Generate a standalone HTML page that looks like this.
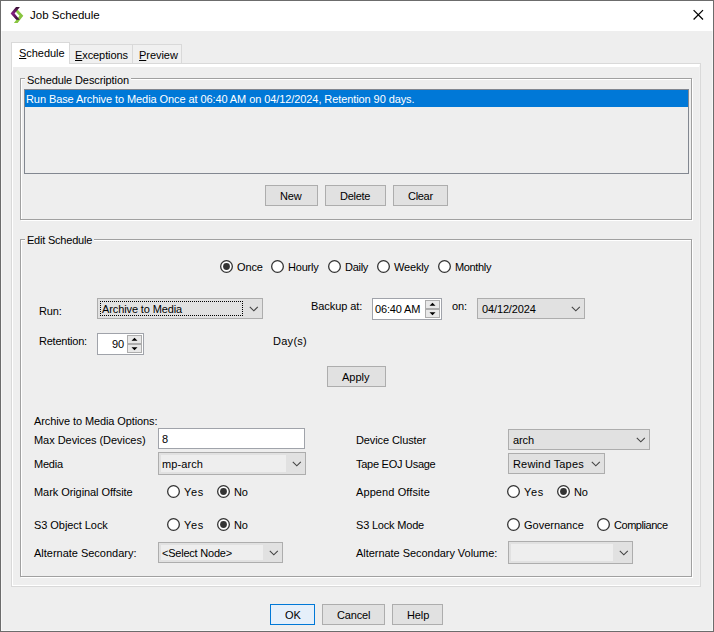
<!DOCTYPE html>
<html><head><meta charset="utf-8">
<style>
html,body{margin:0;padding:0}
body{width:714px;height:632px;position:relative;overflow:hidden;background:#eeeeee;font-family:"Liberation Sans",sans-serif}
div{position:absolute;box-sizing:border-box}
.t{font-size:11px;line-height:13px;letter-spacing:-0.12px;white-space:pre;color:#000}
.bx{border:1px solid #adadad;background:#e1e1e1}
.u{text-decoration:underline}
.r{width:13px;height:13px;border:1px solid #333;border-radius:50%;background:#fff}
.r.on::after{content:"";position:absolute;left:2px;top:2px;width:7px;height:7px;border-radius:50%;background:#333}
svg{position:absolute}
</style></head><body>
<!-- window frame -->
<div style="left:0;top:0;width:714px;height:632px;border:1px solid #6c6c6c"></div>
<div style="left:1px;top:31px;width:712px;height:600px;border:1px solid #f7f7f7;border-top:0"></div>
<div style="left:1px;top:1px;width:712px;height:30px;background:#fff"></div>
<svg style="left:0;top:0" width="30" height="30" viewBox="0 0 30 30">
<defs><linearGradient id="pg" x1="0" y1="7" x2="0" y2="20" gradientUnits="userSpaceOnUse"><stop offset="0" stop-color="#35102f"/><stop offset="0.5" stop-color="#861f82"/><stop offset="1" stop-color="#320b2e"/></linearGradient></defs>
<polygon points="13.7,9.5 17.5,9.5 23.3,15.7 17.6,23 13.9,23 19.5,15.7" fill="#88c540"/>
<polygon points="16,7 19.9,7 14.6,13.4 19.7,19.8 16.2,19.8 10.6,13.4" fill="url(#pg)"/>
</svg>
<svg style="left:690px;top:6px" width="20" height="20" viewBox="0 0 20 20"><path d="M3.6 4.1L13 13.5M13 4.1L3.6 13.5" stroke="#000" stroke-width="1.25"/></svg>

<!-- tab pane -->
<div style="left:11px;top:63px;width:690px;height:524px;border:1px solid #d9d9d9"></div>
<div style="left:12px;top:64px;width:688px;height:522px;border:1px solid #fff;border-top:3px solid #fff;border-right-color:#f1f1f1"></div>
<div style="left:69px;top:44px;width:64px;height:19px;border:1px solid #d9d9d9;border-bottom:0;background:#f0f0f0"></div>
<div style="left:132px;top:44px;width:50px;height:19px;border:1px solid #d9d9d9;border-bottom:0;background:#f0f0f0"></div>
<div style="left:11px;top:42px;width:59px;height:22px;border:1px solid #d9d9d9;border-bottom:0;background:#fff"></div>

<!-- Schedule Description -->
<div style="left:21px;top:79px;width:672px;height:142px;border:1px solid #fff"></div>
<div style="left:20px;top:78px;width:672px;height:142px;border:1px solid #a0a0a0"></div>
<div style="left:24px;top:89px;width:665px;height:85px;border:1px solid #828790;background:#eeeeee"></div>
<div style="left:25px;top:90px;width:663px;height:17px;background:#0078d7"></div>
<div class="bx" style="left:265px;top:185px;width:53px;height:21px"></div>
<div class="bx" style="left:325px;top:185px;width:61px;height:21px"></div>
<div class="bx" style="left:393px;top:185px;width:55px;height:21px"></div>

<!-- Edit Schedule -->
<div style="left:21px;top:240px;width:672px;height:338px;border:1px solid #fff"></div>
<div style="left:20px;top:239px;width:672px;height:338px;border:1px solid #a0a0a0"></div>

<svg style="left:220px;top:260px" width="13" height="13" viewBox="0 0 13 13"><circle cx="6.5" cy="6.5" r="5.85" fill="#fff" stroke="#333" stroke-width="1.3"/><circle cx="6.5" cy="6.5" r="3.4" fill="#333"/></svg><svg style="left:271px;top:260px" width="13" height="13" viewBox="0 0 13 13"><circle cx="6.5" cy="6.5" r="5.85" fill="#fff" stroke="#333" stroke-width="1.3"/></svg><svg style="left:328px;top:260px" width="13" height="13" viewBox="0 0 13 13"><circle cx="6.5" cy="6.5" r="5.85" fill="#fff" stroke="#333" stroke-width="1.3"/></svg><svg style="left:377px;top:260px" width="13" height="13" viewBox="0 0 13 13"><circle cx="6.5" cy="6.5" r="5.85" fill="#fff" stroke="#333" stroke-width="1.3"/></svg><svg style="left:438px;top:260px" width="13" height="13" viewBox="0 0 13 13"><circle cx="6.5" cy="6.5" r="5.85" fill="#fff" stroke="#333" stroke-width="1.3"/></svg>
<div class="bx" style="left:97px;top:298px;width:166px;height:21px"></div>
<div style="left:100px;top:301px;width:143px;height:15px;border:1px dotted #000"></div>
<svg style="left:249px;top:306px" width="10" height="6" viewBox="0 0 10 6"><path d="M0.8 0.8L4.8 4.8L8.8 0.8" fill="none" stroke="#444" stroke-width="1.1"/></svg>

<div style="left:372px;top:298px;width:70px;height:22px;border:1px solid #a0a3aa;background:#fff"></div>
<div style="left:425px;top:300px;width:15px;height:9px;border:1px solid #adadad;background:#e8e8e8"></div>
<div style="left:425px;top:309px;width:15px;height:9px;border:1px solid #adadad;background:#e8e8e8"></div>
<svg style="left:429px;top:302px" width="7" height="14" viewBox="0 0 7 14"><path d="M0.5 3.8L3.5 0.8L6.5 3.8Z M0.5 10.2L3.5 13.2L6.5 10.2Z" fill="#000"/></svg>

<div class="bx" style="left:477px;top:298px;width:108px;height:21px"></div>
<svg style="left:571px;top:306px" width="10" height="6" viewBox="0 0 10 6"><path d="M0.8 0.8L4.8 4.8L8.8 0.8" fill="none" stroke="#444" stroke-width="1.1"/></svg>

<div style="left:97px;top:333px;width:47px;height:22px;border:1px solid #a0a3aa;background:#fff"></div>
<div style="left:127px;top:335px;width:15px;height:9px;border:1px solid #adadad;background:#e8e8e8"></div>
<div style="left:127px;top:344px;width:15px;height:9px;border:1px solid #adadad;background:#e8e8e8"></div>
<svg style="left:131px;top:337px" width="7" height="14" viewBox="0 0 7 14"><path d="M0.5 3.8L3.5 0.8L6.5 3.8Z M0.5 10.2L3.5 13.2L6.5 10.2Z" fill="#000"/></svg>

<div class="bx" style="left:327px;top:366px;width:59px;height:21px"></div>

<div style="left:158px;top:428px;width:147px;height:21px;border:1px solid #a0a3aa;background:#fff"></div>
<div class="bx" style="left:158px;top:452px;width:148px;height:23px;background:#e1e1e1"></div>
<div style="left:161px;top:455px;width:125px;height:17px;background:#eeeeee"></div>
<svg style="left:292px;top:461px" width="10" height="6" viewBox="0 0 10 6"><path d="M0.8 0.8L4.8 4.8L8.8 0.8" fill="none" stroke="#444" stroke-width="1.1"/></svg>

<div class="bx" style="left:508px;top:429px;width:142px;height:21px"></div>
<svg style="left:636px;top:437px" width="10" height="6" viewBox="0 0 10 6"><path d="M0.8 0.8L4.8 4.8L8.8 0.8" fill="none" stroke="#444" stroke-width="1.1"/></svg>
<div class="bx" style="left:508px;top:453px;width:97px;height:21px"></div>
<svg style="left:591px;top:461px" width="10" height="6" viewBox="0 0 10 6"><path d="M0.8 0.8L4.8 4.8L8.8 0.8" fill="none" stroke="#444" stroke-width="1.1"/></svg>

<svg style="left:167px;top:485px" width="13" height="13" viewBox="0 0 13 13"><circle cx="6.5" cy="6.5" r="5.85" fill="#fff" stroke="#333" stroke-width="1.3"/></svg><svg style="left:217px;top:485px" width="13" height="13" viewBox="0 0 13 13"><circle cx="6.5" cy="6.5" r="5.85" fill="#fff" stroke="#333" stroke-width="1.3"/><circle cx="6.5" cy="6.5" r="3.4" fill="#333"/></svg><svg style="left:507px;top:485px" width="13" height="13" viewBox="0 0 13 13"><circle cx="6.5" cy="6.5" r="5.85" fill="#fff" stroke="#333" stroke-width="1.3"/></svg><svg style="left:557px;top:485px" width="13" height="13" viewBox="0 0 13 13"><circle cx="6.5" cy="6.5" r="5.85" fill="#fff" stroke="#333" stroke-width="1.3"/><circle cx="6.5" cy="6.5" r="3.4" fill="#333"/></svg>
<svg style="left:167px;top:518px" width="13" height="13" viewBox="0 0 13 13"><circle cx="6.5" cy="6.5" r="5.85" fill="#fff" stroke="#333" stroke-width="1.3"/></svg><svg style="left:217px;top:518px" width="13" height="13" viewBox="0 0 13 13"><circle cx="6.5" cy="6.5" r="5.85" fill="#fff" stroke="#333" stroke-width="1.3"/><circle cx="6.5" cy="6.5" r="3.4" fill="#333"/></svg><svg style="left:507px;top:518px" width="13" height="13" viewBox="0 0 13 13"><circle cx="6.5" cy="6.5" r="5.85" fill="#fff" stroke="#333" stroke-width="1.3"/></svg><svg style="left:597px;top:518px" width="13" height="13" viewBox="0 0 13 13"><circle cx="6.5" cy="6.5" r="5.85" fill="#fff" stroke="#333" stroke-width="1.3"/></svg>
<div class="bx" style="left:158px;top:542px;width:125px;height:21px;background:#e1e1e1"></div>
<div style="left:161px;top:545px;width:102px;height:15px;background:#eeeeee"></div>
<svg style="left:269px;top:550px" width="10" height="6" viewBox="0 0 10 6"><path d="M0.8 0.8L4.8 4.8L8.8 0.8" fill="none" stroke="#444" stroke-width="1.1"/></svg>
<div class="bx" style="left:508px;top:541px;width:125px;height:23px;background:#e1e1e1"></div>
<div style="left:511px;top:544px;width:102px;height:17px;background:#eeeeee"></div>
<svg style="left:619px;top:550px" width="10" height="6" viewBox="0 0 10 6"><path d="M0.8 0.8L4.8 4.8L8.8 0.8" fill="none" stroke="#444" stroke-width="1.1"/></svg>

<!-- bottom buttons -->
<div style="left:270px;top:604px;width:45px;height:21px;border:1px solid #0078d7;background:#e5effa"></div>
<div class="bx" style="left:322px;top:604px;width:63px;height:21px"></div>
<div class="bx" style="left:392px;top:604px;width:51px;height:21px"></div>
<div class="t" style="left:30px;top:8px;letter-spacing:0.0px;font-size:11.5px;line-height:14px">Job Schedule</div>
<div class="t" style="left:19px;top:47px;letter-spacing:-0.034px;"><span class="u">S</span>chedule</div>
<div class="t" style="left:75px;top:49px;letter-spacing:-0.087px;"><span class="u">E</span>xceptions</div>
<div class="t" style="left:139px;top:49px;letter-spacing:-0.05px;"><span class="u">P</span>review</div>
<div class="t" style="left:25px;top:74px;letter-spacing:-0.1px;padding:0 2px;background:#eeeeee">Schedule Description</div>
<div class="t" style="left:26px;top:93px;letter-spacing:-0.086px;color:#fff">Run Base Archive to Media Once at 06:40 AM on 04/12/2024, Retention 90 days.</div>
<div class="t" style="left:280px;top:190px;letter-spacing:-0.12px;">New</div>
<div class="t" style="left:340px;top:190px;letter-spacing:-0.28px;">Delete</div>
<div class="t" style="left:408px;top:190px;letter-spacing:-0.3px;">Clear</div>
<div class="t" style="left:25px;top:234px;letter-spacing:-0.212px;padding:0 2px;background:#eeeeee">Edit Schedule</div>
<div class="t" style="left:237px;top:261px;letter-spacing:-0.12px;">Once</div>
<div class="t" style="left:288px;top:261px;letter-spacing:-0.2px;">Hourly</div>
<div class="t" style="left:345px;top:261px;letter-spacing:-0.27px;">Daily</div>
<div class="t" style="left:394px;top:261px;letter-spacing:-0.18px;">Weekly</div>
<div class="t" style="left:455px;top:261px;letter-spacing:-0.353px;">Monthly</div>
<div class="t" style="left:39px;top:305px;letter-spacing:-0.12px;">Run:</div>
<div class="t" style="left:102px;top:303px;letter-spacing:-0.113px;">Archive to Media</div>
<div class="t" style="left:311px;top:300px;letter-spacing:-0.064px;">Backup at:</div>
<div class="t" style="left:375px;top:303px;letter-spacing:-0.149px;">06:40 AM</div>
<div class="t" style="left:452px;top:300px;letter-spacing:-0.12px;">on:</div>
<div class="t" style="left:482px;top:303px;letter-spacing:-0.131px;">04/12/2024</div>
<div class="t" style="left:39px;top:335px;letter-spacing:-0.22px;">Retention:</div>
<div class="t" style="left:112px;top:338px;letter-spacing:-0.12px;">90</div>
<div class="t" style="left:273px;top:335px;letter-spacing:0.28px;">Day(s)</div>
<div class="t" style="left:342px;top:371px;letter-spacing:-0.02px;">Apply</div>
<div class="t" style="left:34px;top:415px;letter-spacing:-0.099px;">Archive to Media Options:</div>
<div class="t" style="left:34px;top:434px;letter-spacing:-0.045px;">Max Devices (Devices)</div>
<div class="t" style="left:162px;top:433px;letter-spacing:-0.12px;">8</div>
<div class="t" style="left:34px;top:458px;letter-spacing:-0.22px;">Media</div>
<div class="t" style="left:162px;top:458px;letter-spacing:0.097px;">mp-arch</div>
<div class="t" style="left:356px;top:434px;letter-spacing:-0.097px;">Device Cluster</div>
<div class="t" style="left:513px;top:434px;letter-spacing:-0.12px;">arch</div>
<div class="t" style="left:356px;top:458px;letter-spacing:-0.266px;">Tape EOJ Usage</div>
<div class="t" style="left:513px;top:458px;letter-spacing:0.162px;">Rewind Tapes</div>
<div class="t" style="left:34px;top:486px;letter-spacing:-0.07px;">Mark Original Offsite</div>
<div class="t" style="left:184px;top:486px;letter-spacing:0.6px;">Yes</div>
<div class="t" style="left:234px;top:486px;letter-spacing:-0.12px;">No</div>
<div class="t" style="left:356px;top:486px;letter-spacing:0.095px;">Append Offsite</div>
<div class="t" style="left:524px;top:486px;letter-spacing:0.6px;">Yes</div>
<div class="t" style="left:574px;top:486px;letter-spacing:-0.12px;">No</div>
<div class="t" style="left:34px;top:519px;letter-spacing:-0.058px;">S3 Object Lock</div>
<div class="t" style="left:184px;top:519px;letter-spacing:0.6px;">Yes</div>
<div class="t" style="left:234px;top:519px;letter-spacing:-0.12px;">No</div>
<div class="t" style="left:356px;top:519px;letter-spacing:-0.193px;">S3 Lock Mode</div>
<div class="t" style="left:524px;top:519px;letter-spacing:-0.01px;">Governance</div>
<div class="t" style="left:614px;top:519px;letter-spacing:-0.45px;">Compliance</div>
<div class="t" style="left:34px;top:547px;letter-spacing:-0.015px;">Alternate Secondary:</div>
<div class="t" style="left:162px;top:547px;letter-spacing:-0.22px;">&lt;Select Node&gt;</div>
<div class="t" style="left:356px;top:547px;letter-spacing:-0.043px;">Alternate Secondary Volume:</div>
<div class="t" style="left:285px;top:609px;letter-spacing:-0.12px;">OK</div>
<div class="t" style="left:337px;top:609px;letter-spacing:-0.16px;">Cancel</div>
<div class="t" style="left:407px;top:609px;letter-spacing:-0.12px;">Help</div>
</body></html>
